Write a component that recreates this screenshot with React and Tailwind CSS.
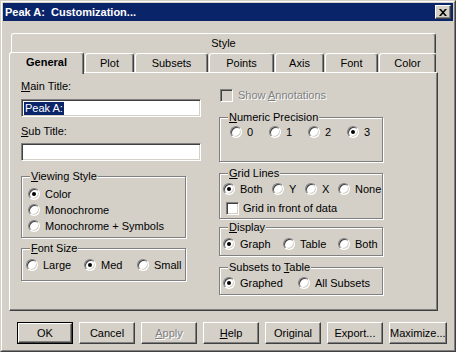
import React from "react";

const sunken =
  "border border-t-[#808080] border-l-[#808080] border-r-white border-b-white shadow-[inset_1px_1px_0_#404040,inset_-1px_-1px_0_#d4d0c8]";
const raised =
  "border border-t-white border-l-white border-r-[#404040] border-b-[#404040] shadow-[inset_-1px_-1px_0_#808080]";

function Radio({ checked }) {
  return (
    <span
      className={`flex shrink-0 items-center justify-center w-[12px] h-[12px] rounded-full bg-white ${sunken}`}
    >
      {checked && <span className="w-[4px] h-[4px] rounded-full bg-black" />}
    </span>
  );
}

function Check({ disabled }) {
  return (
    <span
      className={`block shrink-0 w-[13px] h-[13px] ${sunken} ${
        disabled ? "bg-[#d4d0c8]" : "bg-white"
      }`}
    />
  );
}

function Opt({ checked, label, w }) {
  return (
    <div className={`flex items-center gap-[5px] h-[16px] shrink-0 ${w}`}>
      <Radio checked={checked} />
      <span>{label}</span>
    </div>
  );
}

function Group({ legend, className, children }) {
  return (
    <div
      className={`relative border border-[#808080] shadow-[inset_1px_1px_0_#fff,1px_1px_0_#fff] ${className}`}
    >
      <span className="absolute -top-[7px] left-[8px] px-[1px] bg-[#d4d0c8] leading-[13px]">
        {legend}
      </span>
      {children}
    </div>
  );
}

function Btn({ children, def, disabled }) {
  const face = (
    <span
      className={`flex flex-1 items-center justify-center ${raised} ${
        disabled ? "text-[#808080] [text-shadow:1px_1px_0_#fff]" : ""
      }`}
    >
      {children}
    </span>
  );
  return def ? (
    <div className="flex w-[56px] h-[22px] border border-black">{face}</div>
  ) : (
    <div className="flex w-[56px] h-[22px]">{face}</div>
  );
}

function Tab({ label, w }) {
  return (
    <div
      className={`flex items-center justify-center h-[19px] pt-[1px] rounded-t-[3px] border-t border-l border-r border-t-white border-l-white border-r-[#404040] shadow-[inset_-1px_0_0_#808080] ${w}`}
    >
      {label}
    </div>
  );
}

export default function App() {
  return (
    <div className="w-[456px] h-[352px] bg-[#d4d0c8] border border-t-[#d4d0c8] border-l-[#d4d0c8] border-r-[#404040] border-b-[#404040] font-['Liberation_Sans',Arial,sans-serif] text-[11px] leading-[13px] text-black overflow-hidden">
      <div className="h-full border border-t-white border-l-white border-r-[#808080] border-b-[#808080] p-[1px] flex flex-col">
        {/* title bar */}
        <div className="flex items-center justify-between h-[18px] bg-[#0a246a] pl-[2px] pr-[2px]">
          <span className="font-bold text-white whitespace-pre">Peak A:  Customization...</span>
          <div className={`flex items-center justify-center w-[16px] h-[14px] bg-[#d4d0c8] ${raised}`}>
            <svg width="8" height="7" viewBox="0 0 8 7">
              <path d="M0 0h2l2 2.3L6 0h2L5 3.5 8 7H6L4 4.7 2 7H0l3-3.5z" fill="#000" />
            </svg>
          </div>
        </div>

        {/* tabs */}
        <div className="ml-[6px] mt-[12px] flex flex-col">
          <div className="ml-[2px] w-[425px] h-[20px] flex items-center justify-center rounded-t-[3px] border-t border-l border-r border-t-white border-l-white border-r-[#404040] shadow-[inset_-1px_0_0_#808080]">
            Style
          </div>
          <div className="flex items-end gap-[1px] h-[19px]">
            <div className="relative z-10 -mb-[2px] flex items-center justify-center w-[75px] h-[22px] pb-[2px] font-bold bg-[#d4d0c8] rounded-t-[3px] border-t border-l border-r border-t-white border-l-white border-r-[#404040] shadow-[inset_-1px_0_0_#808080]">
              General
            </div>
            <Tab label="Plot" w="w-[49px]" />
            <Tab label="Subsets" w="w-[73px]" />
            <Tab label="Points" w="w-[65px]" />
            <Tab label="Axis" w="w-[49px]" />
            <Tab label="Font" w="w-[53px]" />
            <Tab label="Color" w="w-[57px]" />
          </div>

          {/* panel */}
          <div className="w-[429px] h-[239px] border border-t-white border-l-white border-r-[#404040] border-b-[#404040] shadow-[inset_-1px_-1px_0_#808080] flex pl-[11px]">
            {/* left column */}
            <div className="w-[180px] flex flex-col">
              <div className="mt-[7px] h-[13px]">
                <u>M</u>ain Title:
              </div>
              <div className={`mt-[6px] h-[18px] bg-white flex items-center pl-[2px] ${sunken}`}>
                <span className="bg-[#0a246a] text-white px-[1px]">Peak A:</span>
              </div>
              <div className="mt-[8px] h-[13px]">
                <u>S</u>ub Title:
              </div>
              <div className={`mt-[5px] h-[18px] bg-white ${sunken}`} />

              <Group
                legend={<><u>V</u>iewing Style</>}
                className="mt-[15px] w-[165px] h-[62px] pt-[9px] pl-[6px]"
              >
                <Opt checked label="Color" />
                <Opt label="Monochrome" />
                <Opt label="Monochrome + Symbols" />
              </Group>

              <Group
                legend={<><u>F</u>ont Size</>}
                className="mt-[10px] w-[165px] h-[33px] pt-[8px] pl-[4px] flex"
              >
                <Opt label="Large" w="w-[58px]" />
                <Opt checked label="Med" w="w-[53px]" />
                <Opt label="Small" />
              </Group>
            </div>

            {/* right column */}
            <div className="ml-[18px] w-[165px] flex flex-col">
              <div className="mt-[16px] ml-[1px] flex items-center gap-[5px] h-[13px] text-[#808080] [text-shadow:1px_1px_0_#fff]">
                <Check disabled />
                <span>
                  Show <u>A</u>nnotations
                </span>
              </div>

              <Group
                legend={<><u>N</u>umeric Precision</>}
                className="mt-[15px] w-[164px] h-[45px] pt-[6px] pl-[10px] flex"
              >
                <Opt label="0" w="w-[39px]" />
                <Opt label="1" w="w-[39px]" />
                <Opt label="2" w="w-[39px]" />
                <Opt checked label="3" />
              </Group>

              <Group
                legend={<><u>G</u>rid Lines</>}
                className="mt-[11px] w-[164px] h-[46px] pt-[7px] pl-[3px]"
              >
                <div className="flex">
                  <Opt checked label="Both" w="w-[49px]" />
                  <Opt label="Y" w="w-[33px]" />
                  <Opt label="X" w="w-[33px]" />
                  <Opt label="None" />
                </div>
                <div className="mt-[3px] ml-[3px] flex items-center gap-[4px] h-[16px]">
                  <Check />
                  <span>Grid in front of data</span>
                </div>
              </Group>

              <Group
                legend={<><u>D</u>isplay</>}
                className="mt-[8px] w-[164px] h-[29px] pt-[8px] pl-[3px] flex"
              >
                <Opt checked label="Graph" w="w-[60px]" />
                <Opt label="Table" w="w-[55px]" />
                <Opt label="Both" />
              </Group>

              <Group
                legend={<>Subsets to <u>T</u>able</>}
                className="mt-[11px] w-[164px] h-[28px] pt-[7px] pl-[3px] flex"
              >
                <Opt checked label="Graphed" w="w-[75px]" />
                <Opt label="All Subsets" />
              </Group>
            </div>
          </div>
        </div>

        {/* buttons */}
        <div className="mt-[11px] ml-[14px] flex gap-[6px]">
          <Btn def>OK</Btn>
          <Btn>Cancel</Btn>
          <Btn disabled>
            <span>
              <u>A</u>pply
            </span>
          </Btn>
          <Btn>
            <span>
              <u>H</u>elp
            </span>
          </Btn>
          <Btn>Original</Btn>
          <Btn>Export...</Btn>
          <Btn>Maximize...</Btn>
        </div>
      </div>
    </div>
  );
}
